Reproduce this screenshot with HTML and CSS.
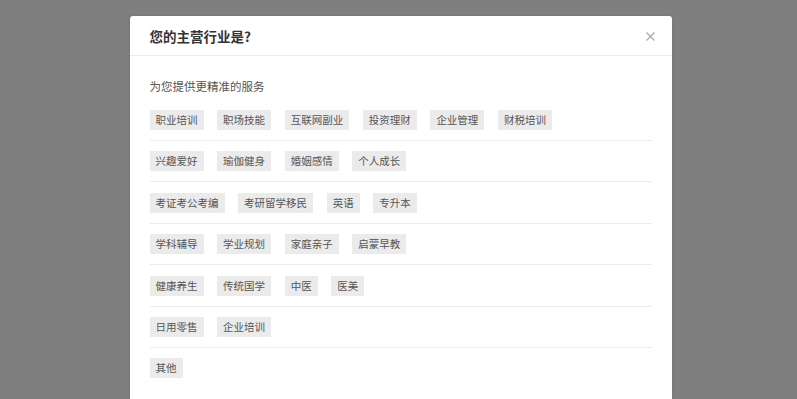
FILE: index.html
```html
<!DOCTYPE html>
<html lang="zh-CN">
<head>
<meta charset="utf-8">
<title>您的主营行业是?</title>
<link rel="stylesheet" href="styles.css">
</head>
<body>
<div class="backdrop">
  <div class="modal">
    <div class="modal-header">
      <h2 class="modal-title">您的主营行业是?</h2>
      <span class="modal-close">
        <svg width="9" height="9" viewBox="0 0 9 9"><path d="M0.5 0.5L8.5 8.5M8.5 0.5L0.5 8.5" stroke="#a8a8a8" stroke-width="1.2" fill="none"/></svg>
      </span>
    </div>
    <div class="modal-body">
      <p class="subtitle">为您提供更精准的服务</p>
      <div class="row">
        <span class="tag">职业培训</span><span class="tag">职场技能</span><span class="tag">互联网副业</span><span class="tag">投资理财</span><span class="tag">企业管理</span><span class="tag">财税培训</span>
      </div>
      <div class="row">
        <span class="tag">兴趣爱好</span><span class="tag">瑜伽健身</span><span class="tag">婚姻感情</span><span class="tag">个人成长</span>
      </div>
      <div class="row">
        <span class="tag">考证考公考编</span><span class="tag">考研留学移民</span><span class="tag">英语</span><span class="tag">专升本</span>
      </div>
      <div class="row">
        <span class="tag">学科辅导</span><span class="tag">学业规划</span><span class="tag">家庭亲子</span><span class="tag">启蒙早教</span>
      </div>
      <div class="row">
        <span class="tag">健康养生</span><span class="tag">传统国学</span><span class="tag">中医</span><span class="tag">医美</span>
      </div>
      <div class="row">
        <span class="tag">日用零售</span><span class="tag">企业培训</span>
      </div>
      <div class="row last">
        <span class="tag">其他</span>
      </div>
    </div>
  </div>
</div>
</body>
</html>
```

FILE: styles.css
```css
html, body {
  margin: 0;
  padding: 0;
  height: 100%;
}
body {
  background: #7f7f7f;
  font-family: "Microsoft YaHei", "Noto Sans CJK SC", "Liberation Sans", sans-serif;
  overflow: hidden;
}
.backdrop {
  display: flex;
  justify-content: center;
  padding-top: 16px;
}
.modal {
  width: 542px;
  background: #fff;
  border-radius: 3px 3px 0 0;
  box-shadow: 0 0 3px rgba(0,0,0,0.15);
  margin-left: 4px;
}
.modal-header {
  height: 39px;
  border-bottom: 1px solid #ececec;
  display: flex;
  align-items: center;
  justify-content: space-between;
  padding: 0 17px 0 20px;
}
.modal-title {
  margin: 0;
  font-size: 13.5px;
  font-weight: bold;
  color: #333;
  line-height: 20px;
  padding-top: 1px;
}
.modal-close {
  display: flex;
  width: 9px;
  height: 9px;
  padding-top: 2px;
}
.modal-body {
  padding: 20px 20px 21px;
}
.subtitle {
  margin: 0 0 14px;
  font-size: 11.5px;
  line-height: 20px;
  color: #555;
}
.row {
  display: flex;
  flex-wrap: wrap;
  gap: 13.6px;
  padding: 0 0 10px;
  margin-bottom: 10.4px;
  border-bottom: 1px solid #ebebeb;
}
.row.last {
  border-bottom: none;
  padding-bottom: 0;
  margin-bottom: 0;
}
.tag {
  display: block;
  height: 20px;
  line-height: 20px;
  padding: 0 6px;
  font-size: 10.5px;
  color: #555;
  background: #ebebeb;
  white-space: nowrap;
}
```
